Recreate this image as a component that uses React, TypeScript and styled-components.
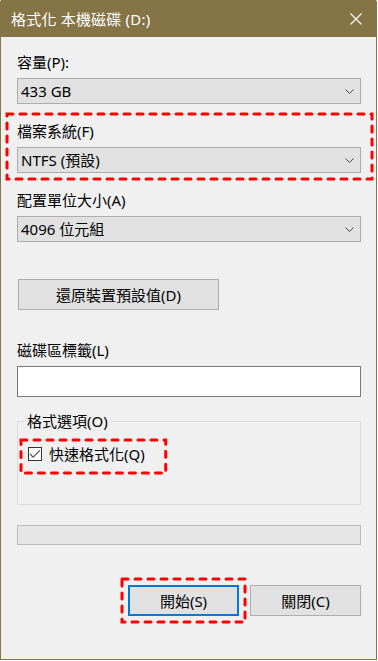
import React from 'react';
import styled, { createGlobalStyle } from 'styled-components';

const OLIVE = '#857445';
const FONT = `"Noto Sans", "Noto Sans CJK TC", sans-serif`;

const GlobalStyle = createGlobalStyle`
  html, body { margin: 0; padding: 0; background: #ffffff; }
  body { font-family: ${FONT}; }
  * { box-sizing: border-box; }
`;

const Window = styled.div`
  width: 377px;
  height: 660px;
  display: flex;
  flex-direction: column;
  border: 1px solid ${OLIVE};
  border-top: 0;
  border-radius: 2px 2px 0 0;
  background: #f0f0f0;
  font-family: ${FONT};
  font-size: 15px;
  line-height: 20px;
  color: #000;
`;

const TitleBar = styled.div`
  height: 37px;
  flex: none;
  display: flex;
  align-items: center;
  justify-content: space-between;
  padding: 1px 14px 0 10px;
  background: ${OLIVE};
  color: #ffffff;
`;

const Title = styled.span`
  font-size: 15px;
  line-height: 20px;
  letter-spacing: 0.2px;
`;

const Body = styled.div`
  flex: 1;
  display: flex;
  flex-direction: column;
  padding: 15px 15px 0 16px;
`;

const Field = styled.div<{ $mt?: number }>`
  display: flex;
  flex-direction: column;
  gap: 6px;
  margin-top: ${(p) => p.$mt ?? 0}px;
`;

const Label = styled.div`
  height: 20px;
  line-height: 20px;
  white-space: nowrap;
`;

const Combo = styled.div`
  height: 26px;
  display: flex;
  align-items: center;
  justify-content: space-between;
  padding: 0 6px 0 3px;
  background: #e1e1e1;
  border: 1px solid #adadad;
  white-space: nowrap;
`;

const Highlight = styled.div<{ $mt?: number; $ml?: number; $fit?: boolean }>`
  position: relative;
  margin-top: ${(p) => p.$mt ?? 0}px;
  margin-left: ${(p) => p.$ml ?? 0}px;
  width: ${(p) => (p.$fit ? 'fit-content' : 'auto')};
`;

const DashSvg = styled.svg<{ $t: number; $r: number; $b: number; $l: number }>`
  position: absolute;
  top: ${(p) => -(p.$t - 1.5)}px;
  right: ${(p) => -(p.$r - 1.5)}px;
  bottom: ${(p) => -(p.$b - 1.5)}px;
  left: ${(p) => -(p.$l - 1.5)}px;
  width: calc(100% + ${(p) => p.$l + p.$r - 3}px);
  height: calc(100% + ${(p) => p.$t + p.$b - 3}px);
  overflow: visible;
  pointer-events: none;
`;

const PushButton = styled.button<{ $w: number; $default?: boolean; $mt?: number; $ml?: number }>`
  width: ${(p) => p.$w}px;
  height: 31px;
  margin: ${(p) => p.$mt ?? 0}px 0 0 ${(p) => p.$ml ?? 0}px;
  padding: 0;
  background: #e1e1e1;
  border: ${(p) => (p.$default ? '2px solid #0078d7' : '1px solid #adadad')};
  font-family: ${FONT};
  font-size: 15px;
  line-height: 20px;
  color: #000;
  display: flex;
  align-items: center;
  justify-content: center;
`;

const TextBox = styled.div`
  height: 31px;
  background: #ffffff;
  border: 1px solid #7a7a7a;
`;

const Group = styled.fieldset`
  margin: 14px 0 0 0;
  padding: 13px 0 40px 6px;
  border: 1px solid #dcdcdc;
  min-width: 0;
`;

const Legend = styled.legend`
  padding: 0 3px;
  line-height: 20px;
  height: 20px;
`;

const CheckRow = styled.label`
  display: flex;
  align-items: center;
  gap: 7px;
  height: 20px;
  white-space: nowrap;
`;

const CheckBox = styled.span`
  width: 14px;
  height: 14px;
  flex: none;
  display: flex;
  align-items: center;
  justify-content: center;
  background: #ffffff;
  border: 1px solid #333333;
`;

const Progress = styled.div`
  margin-top: 20px;
  height: 20px;
  background: #e6e6e6;
  border: 1px solid #bcbcbc;
`;

const ButtonRow = styled.div`
  margin-top: 40px;
  display: flex;
  justify-content: flex-end;
  align-items: flex-start;
  gap: 11px;
`;

const Chevron = () => (
  <svg width="9" height="5" viewBox="0 0 9 5">
    <path d="M0.5 0.5 L4.5 4.5 L8.5 0.5" fill="none" stroke="#444" strokeWidth="1" />
  </svg>
);

const CloseX = () => (
  <svg width="12" height="12" viewBox="0 0 12 12">
    <path d="M0.5 0.5 L11.5 11.5 M11.5 0.5 L0.5 11.5" stroke="#fff" strokeWidth="1.1" fill="none" />
  </svg>
);

const Dashed: React.FC<{ t: number; r: number; b: number; l: number }> = ({ t, r, b, l }) => (
  <DashSvg $t={t} $r={r} $b={b} $l={l}>
    <rect
      x="0"
      y="0"
      width="100%"
      height="100%"
      fill="none"
      stroke="#ff0000"
      strokeWidth="3"
      strokeDasharray="6 7"
      strokeLinecap="round"
    />
  </DashSvg>
);

const Select: React.FC<{ value: string }> = ({ value }) => (
  <Combo role="combobox">
    <span>{value}</span>
    <Chevron />
  </Combo>
);

export default function App() {
  return (
    <>
      <GlobalStyle />
      <Window>
        <TitleBar>
          <Title>格式化 本機磁碟 (D:)</Title>
          <CloseX />
        </TitleBar>
        <Body>
          <Field>
            <Label>容量(P):</Label>
            <Select value="433 GB" />
          </Field>

          <Highlight $mt={17}>
            <Field>
              <Label>檔案系統(F)</Label>
              <Select value="NTFS (預設)" />
            </Field>
            <Dashed t={9} r={12} b={7} l={12} />
          </Highlight>

          <Field $mt={17}>
            <Label>配置單位大小(A)</Label>
            <Select value="4096 位元組" />
          </Field>

          <PushButton $w={201} $mt={37} $ml={1}>還原裝置預設值(D)</PushButton>

          <Field $mt={30}>
            <Label>磁碟區標籤(L)</Label>
            <TextBox />
          </Field>

          <Group>
            <Legend>格式選項(O)</Legend>
            <Highlight $fit $ml={4}>
              <CheckRow>
                <CheckBox>
                  <svg width="12" height="10" viewBox="0 0 12 10">
                    <path d="M1 5 L4.2 8.2 L11 1.2" fill="none" stroke="#555" strokeWidth="1.2" />
                  </svg>
                </CheckBox>
                快速格式化(Q)
              </CheckRow>
              <Dashed t={6} r={22} b={10} l={9} />
            </Highlight>
          </Group>

          <Progress />

          <ButtonRow>
            <Highlight>
              <PushButton $w={111} $default>開始(S)</PushButton>
              <Dashed t={8} r={7} b={7} l={8} />
            </Highlight>
            <PushButton $w={111}>關閉(C)</PushButton>
          </ButtonRow>
        </Body>
      </Window>
    </>
  );
}
